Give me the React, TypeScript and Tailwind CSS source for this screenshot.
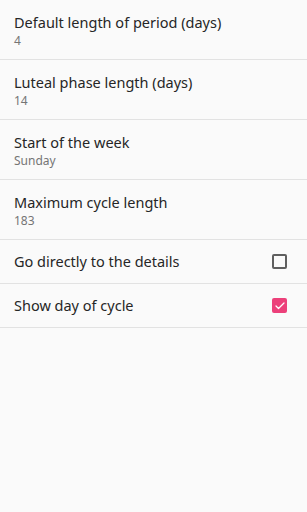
import { Check } from "lucide-react";

const valueRows = [
  { title: "Default length of period (days)", value: "4" },
  { title: "Luteal phase length (days)", value: "14" },
  { title: "Start of the week", value: "Sunday" },
  { title: "Maximum cycle length", value: "183" },
];

const toggleRows = [
  { title: "Go directly to the details", checked: false },
  { title: "Show day of cycle", checked: true },
];

function Checkbox({ checked }: { checked: boolean }) {
  if (checked) {
    return (
      <div className="w-[15px] h-[15px] rounded-[2px] bg-[#ec407a] flex items-center justify-center">
        <Check size={12} strokeWidth={2.5} className="text-white" />
      </div>
    );
  }
  return <div className="w-[15px] h-[15px] rounded-[2px] border-2 border-[#5f5f5f]" />;
}

export default function App() {
  return (
    <div
      className="w-[307px] h-[512px] bg-[#fafafa] text-[#262626]"
      style={{ fontFamily: '"Noto Sans", "Open Sans", sans-serif' }}
    >
      {valueRows.map((row) => (
        <div key={row.title} className="h-[60px] px-[14px] pt-[12px] border-b border-[#e2e2e2]">
          <div className="text-[14.5px] leading-[21px]">{row.title}</div>
          <div className="text-[12px] leading-[15px] text-[#757575]">{row.value}</div>
        </div>
      ))}
      {toggleRows.map((row) => (
        <div
          key={row.title}
          className="h-[44px] pl-[14px] pr-[20px] flex items-center justify-between border-b border-[#e2e2e2]"
        >
          <span className="text-[14.5px]">{row.title}</span>
          <Checkbox checked={row.checked} />
        </div>
      ))}
    </div>
  );
}
